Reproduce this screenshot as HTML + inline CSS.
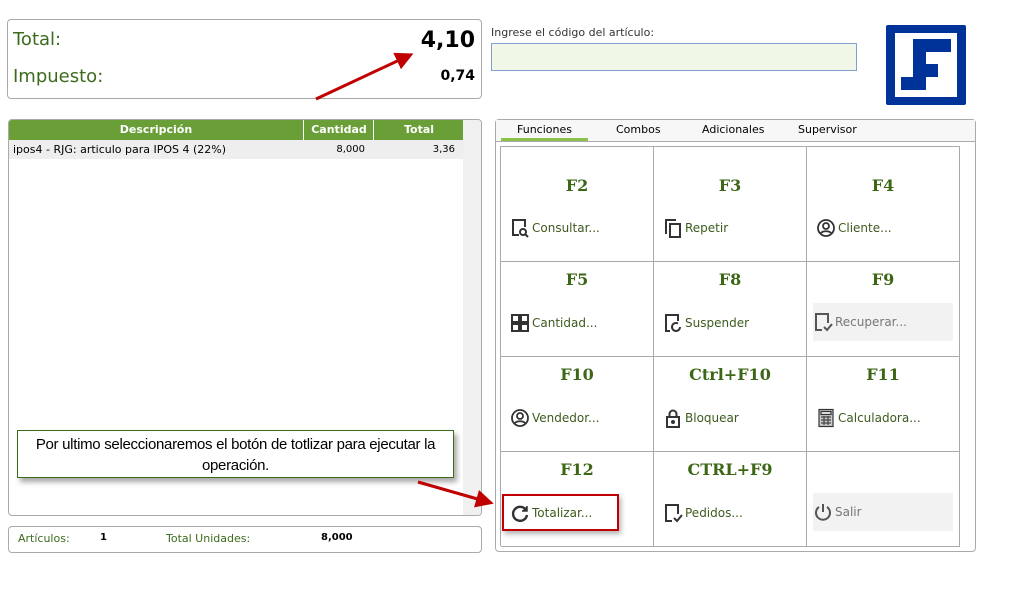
<!DOCTYPE html><html><head><style>
body{margin:0;width:1022px;height:595px;background:#fff;position:relative;font-family:"DejaVu Sans","Liberation Sans",sans-serif;overflow:hidden}
.a{position:absolute}
.box{border:1px solid #aaa;border-radius:4px;position:absolute;background:#fff}
.g{color:#3d6b1e}
.cell{position:absolute;border-right:1px solid #aaa;border-bottom:1px solid #aaa;box-sizing:border-box}
.cell .k{position:absolute;top:29px;width:100%;text-align:center;font-weight:bold;font-size:16px;color:#3d6616;font-family:"DejaVu Serif","Liberation Serif",serif}
.cell .b{position:absolute;left:9px;width:128px;height:38px;display:flex;align-items:center;font-size:12px;color:#3d5a1e}
.cell .b svg{margin-right:2px}
.dis{background:#f2f2f2;left:6px!important;width:140px!important;color:#777!important}
</style></head><body>
<div class="box" style="left:7px;top:19px;width:473px;height:78px">
<div class="a g" style="left:5px;top:9px;font-size:18px">Total:</div>
<div class="a g" style="left:5px;top:46px;font-size:18px">Impuesto:</div>
<div class="a" style="right:6px;top:8px;font-size:22px;font-weight:bold">4,10</div>
<div class="a" style="right:6px;top:48px;font-size:14px;font-weight:bold">0,74</div>
</div>
<div class="a" style="left:491px;top:26px;font-size:11px;color:#333">Ingrese el código del artículo:</div>
<div class="a" style="left:491px;top:43px;width:364px;height:26px;border:1px solid #7fa0d0;background:#f0f7e6"></div>
<div class="a" style="left:886px;top:25px;width:80px;height:80px;background:#003399;border-radius:2px">
<div class="a" style="left:9px;top:8px;width:62px;height:64px;background:#fff"></div>
<div class="a" style="left:27px;top:14px;width:38px;height:13px;background:#003399"></div>
<div class="a" style="left:27px;top:14px;width:13px;height:26px;background:#003399"></div>
<div class="a" style="left:27px;top:39px;width:25px;height:13px;background:#003399"></div>
<div class="a" style="left:15px;top:52px;width:25px;height:13px;background:#003399"></div>
<div class="a" style="left:27px;top:39px;width:13px;height:26px;background:#003399"></div>
</div>
<div class="box" style="left:8px;top:119px;width:472px;height:395px;overflow:hidden">
<div class="a" style="left:0;top:0;width:454px;height:20px;background:#6a9e37;color:#fff;font-size:11px;font-weight:bold;line-height:20px">
<span class="a" style="left:0;width:294px;text-align:center">Descripción</span>
<span class="a" style="left:294px;width:70px;text-align:center;border-left:1px solid #fff">Cantidad</span>
<span class="a" style="left:364px;width:90px;text-align:center;border-left:1px solid #fff">Total</span></div>
<div class="a" style="left:0;top:20px;width:454px;height:19px;background:#eee;font-size:11px;line-height:19px">
<span class="a" style="left:4px">ipos4 - RJG: articulo para IPOS 4 (22%)</span>
<span class="a" style="left:300px;width:56px;text-align:right;font-size:10px">8,000</span>
<span class="a" style="left:370px;width:76px;text-align:right;font-size:10px">3,36</span></div>
<div class="a" style="left:454px;top:0;width:18px;height:395px;background:#f0f0f0"></div>
</div>
<div class="box" style="left:8px;top:526px;width:472px;height:25px;font-size:11px">
<span class="a g" style="left:9px;top:5px">Artículos:</span><span class="a" style="left:91px;top:5px;font-weight:bold;font-size:10px">1</span>
<span class="a g" style="left:157px;top:5px">Total Unidades:</span><span class="a" style="left:312px;top:5px;font-weight:bold;font-size:10px">8,000</span></div>

<div class="box" style="left:495px;top:119px;width:479px;height:431px">
<div class="a" style="left:0;top:0;width:479px;height:21px;border-bottom:1px solid #aaa;background:#f7f7f7;font-size:11px">
<span class="a" style="left:5px;top:3px;width:87px;text-align:center;border-bottom:3px solid #8bc34a;height:15px">Funciones</span>
<span class="a" style="left:120px;top:3px">Combos</span><span class="a" style="left:206px;top:3px">Adicionales</span><span class="a" style="left:302px;top:3px">Supervisor</span></div>
</div>
<div class="a" style="left:500px;top:146px;width:460px;height:400px;border-left:1px solid #aaa;border-top:1px solid #aaa;box-sizing:border-box">
<div class="cell" style="left:0;top:0;width:153px;height:115px"><div class="k">F2</div><div class="b" style="top:62px"><svg width="20" height="20" viewBox="0 0 20 20" fill="none" stroke="#333" stroke-width="2"><path d="M9 17H3V2h12v7"/><circle cx="13" cy="14" r="3"/><path d="M15 16l3 3"/></svg>Consultar...</div></div>
<div class="cell" style="left:153px;top:0;width:153px;height:115px"><div class="k">F3</div><div class="b" style="top:62px"><svg width="20" height="20" viewBox="0 0 20 20" fill="none" stroke="#333" stroke-width="2"><path d="M3 16V2h10"/><rect x="7" y="6" width="10" height="13"/></svg>Repetir</div></div>
<div class="cell" style="left:306px;top:0;width:153px;height:115px"><div class="k">F4</div><div class="b" style="top:62px"><svg width="20" height="20" viewBox="0 0 20 20" fill="none" stroke="#333" stroke-width="1.8"><circle cx="10" cy="10" r="8"/><circle cx="10" cy="8" r="3"/><path d="M4.5 15.5c2-3 9-3 11 0"/></svg>Cliente...</div></div>
<div class="cell" style="left:0;top:115px;width:153px;height:95px"><div class="k" style="top:8px">F5</div><div class="b" style="top:42px"><svg width="20" height="20" viewBox="0 0 20 20" fill="none" stroke="#333" stroke-width="2"><rect x="2" y="2" width="7" height="7"/><rect x="11" y="2" width="7" height="7"/><rect x="2" y="11" width="7" height="7"/><rect x="11" y="11" width="7" height="7"/></svg>Cantidad...</div></div>
<div class="cell" style="left:153px;top:115px;width:153px;height:95px"><div class="k" style="top:8px">F8</div><div class="b" style="top:42px"><svg width="20" height="20" viewBox="0 0 20 20" fill="none" stroke="#333" stroke-width="2"><path d="M7 18H3V2h12v6"/><path d="M17 14a4 4 0 1 1-2-3.5"/></svg>Suspender</div></div>
<div class="cell" style="left:306px;top:115px;width:153px;height:95px"><div class="k" style="top:8px">F9</div><div class="b dis" style="top:41px"><svg width="20" height="20" viewBox="0 0 20 20" fill="none" stroke="#555" stroke-width="2"><path d="M9 18H3V2h12v9"/><path d="M11 15l3 3 5-6"/></svg>Recuperar...</div></div>
<div class="cell" style="left:0;top:210px;width:153px;height:95px"><div class="k" style="top:8px">F10</div><div class="b" style="top:42px"><svg width="20" height="20" viewBox="0 0 20 20" fill="none" stroke="#333" stroke-width="1.8"><circle cx="10" cy="10" r="8"/><circle cx="10" cy="8" r="3"/><path d="M4.5 15.5c2-3 9-3 11 0"/></svg>Vendedor...</div></div>
<div class="cell" style="left:153px;top:210px;width:153px;height:95px"><div class="k" style="top:8px">Ctrl+F10</div><div class="b" style="top:42px"><svg width="20" height="20" viewBox="0 0 20 20" fill="none" stroke="#333" stroke-width="2"><rect x="4" y="9" width="12" height="10"/><path d="M6.5 9V6a3.5 3.5 0 0 1 7 0v3"/><circle cx="10" cy="14" r="1" fill="#333"/></svg>Bloquear</div></div>
<div class="cell" style="left:306px;top:210px;width:153px;height:95px"><div class="k" style="top:8px">F11</div><div class="b" style="top:42px"><svg width="20" height="20" viewBox="0 0 20 20" fill="#888" stroke="#333" stroke-width="1.2"><rect x="3" y="1.5" width="14" height="17" fill="#ccc"/><rect x="5" y="3.5" width="10" height="3" fill="#eee"/><path d="M5 9h10M5 12h10M5 15h10M8 8v9M12 8v9" stroke="#444"/></svg>Calculadora...</div></div>
<div class="cell" style="left:0;top:305px;width:153px;height:95px"><div class="k" style="top:8px">F12</div><div class="b" style="top:42px"><svg width="20" height="20" viewBox="0 0 20 20" fill="none" stroke="#333" stroke-width="2.4"><path d="M16.5 8A7 7 0 1 0 17 12"/><path d="M17 3v5h-5" fill="#333" stroke-width="1.5"/></svg>Totalizar...</div></div>
<div class="cell" style="left:153px;top:305px;width:153px;height:95px"><div class="k" style="top:8px">CTRL+F9</div><div class="b" style="top:42px"><svg width="20" height="20" viewBox="0 0 20 20" fill="none" stroke="#333" stroke-width="2"><path d="M9 18H3V2h12v9"/><path d="M11 15l3 3 5-6"/></svg>Pedidos...</div></div>
<div class="cell" style="left:306px;top:305px;width:153px;height:95px"><div class="b dis" style="top:41px"><svg width="20" height="20" viewBox="0 0 20 20" fill="none" stroke="#555" stroke-width="2"><path d="M6 5a7 7 0 1 0 8 0"/><path d="M10 2v8"/></svg>Salir</div></div>
</div>
<div class="a" style="left:502px;top:494px;width:113px;height:33px;border:2px solid #c00000;box-shadow:2px 3px 5px rgba(0,0,0,.3)"></div>
<div class="a" style="left:17px;top:430px;width:437px;height:48px;border:1px solid #3d6b1e;background:#fff;box-shadow:3px 4px 5px rgba(0,0,0,.35);text-align:center;font-family:'Liberation Sans',sans-serif;font-size:15px;line-height:21px;padding-top:3px;box-sizing:border-box;letter-spacing:-0.3px">Por ultimo seleccionaremos el botón de totlizar para ejecutar la operación.</div>
<svg class="a" style="left:0;top:0" width="1022" height="595"><defs><marker id="m" markerWidth="6" markerHeight="6" refX="4" refY="3" orient="auto"><path d="M0 0L6 3L0 6z" fill="#c00000"/></marker></defs>
<line x1="316" y1="99" x2="408" y2="56" stroke="#c00000" stroke-width="3" marker-end="url(#m)"/>
<line x1="418" y1="482" x2="488" y2="502" stroke="#c00000" stroke-width="3" marker-end="url(#m)"/></svg>
</body></html>
